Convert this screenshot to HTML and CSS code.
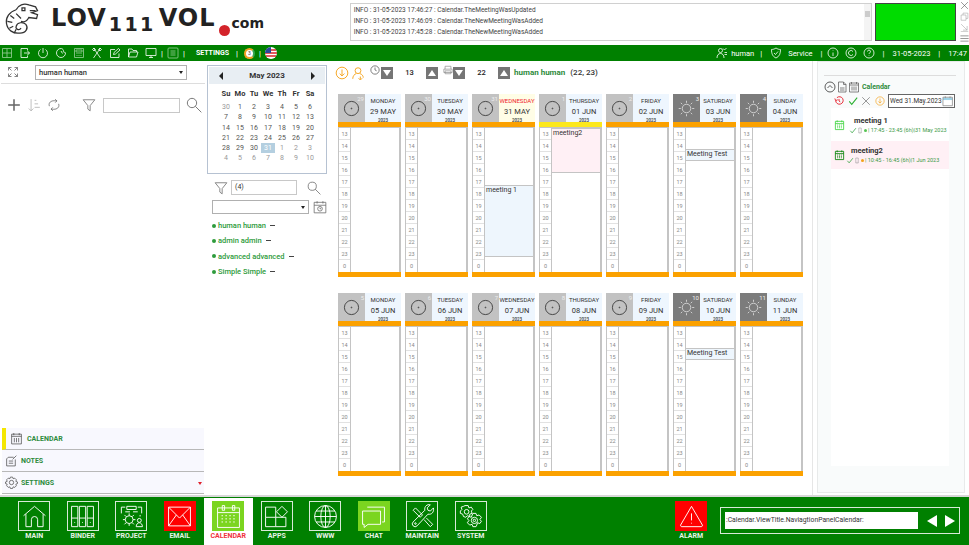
FILE: index.html
```html
<!DOCTYPE html>

<html>

<head>
    <title>Calendar - LOV111VOL</title>
    <link rel="stylesheet" href="styles.css">
</head>

<body>
    <svg class="iconDefs" xmlns="http://www.w3.org/2000/svg">
        <symbol id="grid" viewBox="0 0 24 24"><path d="M3 3h18v18H3zM12 3v18M3 12h18" /></symbol>
        <symbol id="exit" viewBox="0 0 24 24"><path d="M17 7V3H4v18h13v-4M10 12h11M17 8l4 4-4 4" /></symbol>
        <symbol id="power" viewBox="0 0 24 24"><path d="M12 2v10M7 5a9 9 0 1 0 10 0" /></symbol>
        <symbol id="dial" viewBox="0 0 24 24"><path d="M12 3a9 9 0 1 0 9 9c0-2-3-1-4-2s1-3-1-5-3-2-4-2zM8 9h.1M8 14h.1M12 17h.1M12 8l3 5" /></symbol>
        <symbol id="calc" viewBox="0 0 24 24"><path d="M3 3h18v18H3zM6 6h12v4H6zM7 13h2M11 13h2M15 13h2M7 17h2M11 17h2M15 17h2" /></symbol>
        <symbol id="tools" viewBox="0 0 24 24"><path d="M5 2l14 20M19 2L5 22M3 5l3-3 3 3-3 3zM15 5l3-3 3 3-3 3z" /></symbol>
        <symbol id="edit" viewBox="0 0 24 24"><path d="M20 13v8H3V5h9M9 15l1-4L19 3l3 3-9 8z" /></symbol>
        <symbol id="folder" viewBox="0 0 24 24"><path d="M3 20V4h7l2 3h7v3M3 20l3-10h16l-3 10z" /></symbol>
        <symbol id="monitor" viewBox="0 0 24 24"><path d="M2 3h20v14H2zM12 17v4M8 21h8" /></symbol>
        <symbol id="lines" viewBox="0 0 24 24"><path d="M4 2h16a2 2 0 0 1 2 2v16a2 2 0 0 1-2 2H4a2 2 0 0 1-2-2V4a2 2 0 0 1 2-2zM7 8h10M7 12h10M7 16h10" /></symbol>
        <symbol id="users" viewBox="0 0 24 24"><path d="M9 11a4 4 0 1 0 0-8 4 4 0 0 0 0 8zM2 22c0-6 3-9 7-9s7 3 7 9M14 3l3 3 4-4M17 11h5M17 15h5" /></symbol>
        <symbol id="shield" viewBox="0 0 24 24"><path d="M12 2c3 2 6 3 9 3 0 8-2 14-9 17C5 19 3 13 3 5c3 0 6-1 9-3zM8 12l3 3 5-6" /></symbol>
        <symbol id="info" viewBox="0 0 24 24"><circle cx="12" cy="12" r="10" /><path d="M12 7v1M12 11v7" /></symbol>
        <symbol id="copy" viewBox="0 0 24 24"><circle cx="12" cy="12" r="10" /><path d="M16 9a5 5 0 1 0 0 6" /></symbol>
        <symbol id="help" viewBox="0 0 24 24"><circle cx="12" cy="12" r="10" /><path d="M9 9a3 3 0 1 1 4 3c-1 .6-1 1-1 2M12 17v1" /></symbol>
        <symbol id="expand" viewBox="0 0 24 24"><path d="M3 9V3h6M3 3l6 6M21 9V3h-6M21 3l-6 6M3 15v6h6M3 21l6-6M21 15v6h-6M21 21l-6-6" /></symbol>
        <symbol id="plus" viewBox="0 0 24 24"><path d="M12 2v20M2 12h20" /></symbol>
        <symbol id="sort" viewBox="0 0 24 24"><path d="M7 2v20M3 18l4 4 4-4M13 4h3M13 10h6M13 16h9" /></symbol>
        <symbol id="refresh" viewBox="0 0 24 24"><path d="M4 14a8 8 0 0 1 0-5c2-4 6-5 13-4M14 2l3 3-3 3M20 10a8 8 0 0 1 0 5c-2 4-6 5-13 4M10 22l-3-3 3-3" /></symbol>
        <symbol id="filter" viewBox="0 0 24 24"><path d="M2 3h20l-8 10v9l-4-3v-6z" /></symbol>
        <symbol id="search" viewBox="0 0 24 24"><circle cx="9" cy="9" r="7" /><path d="M14 14l9 9" /></symbol>
        <symbol id="camera" viewBox="0 0 24 24"><path d="M2 4h20v18H2zM2 9h20M7 2v4M17 2v4" /><circle cx="12" cy="15" r="4" /><path d="M12 13v2h2" /></symbol>
        <symbol id="download" viewBox="0 0 24 24"><circle cx="12" cy="12" r="10" /><path d="M12 6v11M8 13l4 4 4-4" /></symbol>
        <symbol id="person" viewBox="0 0 24 24"><path d="M12 13a5 5 0 1 0 0-10 5 5 0 0 0 0 10zM3 22c0-5 3-8 6-9M21 20c0-3-2-6-6-7M16 18v5M13 21l3 3 3-3" /></symbol>
        <symbol id="clock" viewBox="0 0 24 24"><circle cx="12" cy="12" r="10" /><path d="M12 6v6l4 2" /></symbol>
        <symbol id="printer" viewBox="0 0 24 24"><path d="M5 10V3h14v7M2 10h20v8H2zM5 14h14v7H5z" /></symbol>
        <symbol id="dayClock" viewBox="0 0 24 24"><circle cx="12" cy="12" r="10" /><circle cx="12" cy="12" r=".6" /></symbol>
        <symbol id="sun" viewBox="0 0 24 24"><circle cx="12" cy="12" r="6" /><path d="M12 1v3M12 20v3M1 12h3M20 12h3M4 4l2 2M18 18l2 2M20 4l-2 2M6 18l-2 2" /></symbol>
        <symbol id="collapse" viewBox="0 0 24 24"><circle cx="12" cy="12" r="10" /><path d="M7 14l5-5 5 5" /></symbol>
        <symbol id="doc" viewBox="0 0 24 24"><path d="M5 22V2h10l5 5v15zM15 2v5h5M8 14h9M8 18h9" /></symbol>
        <symbol id="calSmall" viewBox="0 0 24 24"><path d="M3 4h18v18H3zM3 8h18M7 2v4M17 2v4M8 11v8M12 11v8M16 11v8" /></symbol>
        <symbol id="alarm" viewBox="0 0 24 24"><path d="M7 4a9 9 0 1 1-3 7M2 6l2 5 5-2M12 7v5l3 2" /></symbol>
        <symbol id="check" viewBox="0 0 24 24"><path d="M3 13l6 7L22 4" /></symbol>
        <symbol id="cross" viewBox="0 0 24 24"><path d="M3 3l18 18M21 3L3 21" /></symbol>
        <symbol id="calDots" viewBox="0 0 24 24"><path d="M3 4h18v18H3zM3 9h18M7 2v4M17 2v4M7 12h2M11 12h2M15 12h2M7 15h2M11 15h2M15 15h2M7 18h2M11 18h2M15 18h2" /></symbol>
        <symbol id="mobile" viewBox="0 0 24 24"><path d="M7 2h10v20H7zM11 19h2" /></symbol>
        <symbol id="note" viewBox="0 0 24 24"><path d="M16 6H6L3 9v13h16V10M7 13h8M7 17h8M14 10l7-7" /></symbol>
        <symbol id="gear" viewBox="0 0 24 24"><circle cx="12" cy="12" r="4" /><path d="M10 2h4l1 3 3-1 3 3-1 3 3 1v3l-3 1 1 3-3 3-3-1-1 3h-4l-1-3-3 1-3-3 1-3-3-1v-3l3-1-1-3 3-3 3 1z" /></symbol>
        <symbol id="home" viewBox="0 0 32 32"><path d="M2 15L16 3l14 12M5 13v16h7v-9a4 4 0 0 1 8 0v9h7V13" /></symbol>
        <symbol id="binder" viewBox="0 0 32 32"><path d="M2 3h8v26H2zM12 3h8v26h-8zM22 3h8v26h-8zM2 18h8M12 18h8M22 18h8M6 23v1M16 23v1M26 23v1" /></symbol>
        <symbol id="project" viewBox="0 0 32 32"><path d="M3 12V4h5M24 4h5v8M10 3h12v4H10zM8 10h6M18 10h6M27 16v-2" /><circle cx="13" cy="20" r="5" /><path d="M13 12v3M13 25v3M5 20h3M18 20h3M7 14l2 2M19 14l-2 2M7 26l2-2M19 26l-2-2" /><circle cx="26" cy="21" r="2.5" /><path d="M22 29c0-3 2-5 4-5s4 2 4 5z" /></symbol>
        <symbol id="mail" viewBox="0 0 32 32"><path d="M2 4h28v24H2zM2 4l14 14L30 4M2 28l10-14M30 28L20 14" /></symbol>
        <symbol id="bigCal" viewBox="0 0 32 32"><path d="M2 5h28v25H2zM2 11h28M8 2h3v6H8zM21 2h3v6h-3z" /><path class="dots" d="M7 15h2M12 15h2M17 15h2M22 15h2M7 19h2M12 19h2M17 19h2M22 19h2M7 23h2M12 23h2M17 23h2M22 23h2" /></symbol>
        <symbol id="apps" viewBox="0 0 32 32"><path d="M2 4h13v13H2zM2 17v12h13V17M15 29h13V17H15M16 10l7-7 7 7-7 7z" /></symbol>
        <symbol id="globe" viewBox="0 0 32 32"><circle cx="16" cy="16" r="14" /><ellipse cx="16" cy="16" rx="6" ry="14" /><path d="M16 2v28M2 16h28M4 9h24M4 23h24" /></symbol>
        <symbol id="chat" viewBox="0 0 32 32"><path d="M8 4h22v19h-3M2 9h23v17H9l-5 4v-4H2z" /></symbol>
        <symbol id="wrench" viewBox="0 0 32 32"><path d="M30 5l-4 4-3-1-1-3 4-4c-4-1-8 2-7 7L4 23a3 3 0 0 0 5 5L23 13c5 1 8-3 7-8zM4 8l3-3 9 9-3 3zM18 20l8 9 3-3-8-8" /><circle cx="7" cy="25" r="1" /></symbol>
        <symbol id="gears" viewBox="0 0 32 32"><circle cx="11" cy="10" r="3" /><path d="M9 2h4l1 3 3-1 2 3-2 2 1 3-3 1v3l-3-1-2 2-3-1-1-3-3-1V9l2-2-1-3 3-1z" /><circle cx="21" cy="21" r="4" /><circle cx="21" cy="21" r="1.5" /><path d="M19 12h4l1 3 3-1 3 3-2 3 2 2-2 3-3-1-1 3-1 2h-4l-1-3-3 1-3-3 2-3-2-2 2-3 3 1z" /></symbol>
        <symbol id="warn" viewBox="0 0 32 32"><path d="M16 3L2 27a2 2 0 0 0 1 2h26a2 2 0 0 0 1-2zM16 12v9M16 24v1" /></symbol>
    </svg>

    <div class="app">
        <header class="topRow">
            <div class="logo">
                <svg class="logoIcon" viewBox="0 0 36 34">
                    <path d="M12 8c2-5 8-7 13-5l7 2 2 4-6 2 6 2-1 4-8-1c-2 4-5 5-8 4" />
                    <path d="M12 8C5 10 1 16 2 22c1 7 7 11 14 10 6 0 9-5 6-9-3-3-9-2-10 2-1 3 3 5 5 2" />
                    <path d="M6 14l4 3M3 20l5 1M5 27l4-2M10 32l2-4M18 6h3v3h-3zM12 12l5 5M26 9h6" />
                </svg>
                <span class="logoWord">LOV</span>
                <span class="logoNum">111</span>
                <span class="logoWord">VOL</span>
                <span class="logoDot"></span>
                <span class="logoCom">com</span>
            </div>
            <div class="logBox">
                <div class="logLines">
                    <div>INFO : 31-05-2023 17:46:27 : Calendar.TheMeetingWasUpdated</div>
                    <div>INFO : 31-05-2023 17:46:09 : Calendar.TheNewMeetingWasAdded</div>
                    <div>INFO : 31-05-2023 17:45:28 : Calendar.TheNewMeetingWasAdded</div>
                </div>
                <div class="logScroll"><span></span></div>
            </div>
            <div class="statusBox"></div>
            <div class="winBtns">
                <svg class="ic"><use href="#cross" /></svg>
                <svg class="ic lite" viewBox="0 0 24 24"><path d="M8 8V3h13v14h-5M3 8h13v14H3z" /></svg>
                <svg class="ic lite" viewBox="0 0 24 24"><path d="M3 3l16 16M19 8v11H8M2 23h20" /></svg>
                <svg class="ic" viewBox="0 0 24 24"><path d="M1 5h22M1 12h22M1 19h22" /></svg>
            </div>
        </header>

        <nav class="menuBar">
            <svg class="ic dimIc"><use href="#grid" /></svg>
            <svg class="ic"><use href="#exit" /></svg>
            <svg class="ic"><use href="#power" /></svg>
            <svg class="ic"><use href="#dial" /></svg>
            <svg class="ic dimIc"><use href="#calc" /></svg>
            <svg class="ic"><use href="#tools" /></svg>
            <svg class="ic"><use href="#edit" /></svg>
            <svg class="ic"><use href="#folder" /></svg>
            <svg class="ic"><use href="#monitor" /></svg>
            <span class="sep">|</span>
            <svg class="ic dimIc"><use href="#lines" /></svg>
            <span class="sep">|</span>
            <span class="menuText">SETTINGS</span>
            <span class="sep">|</span>
            <span class="badge">3</span>
            <span class="sep">|</span>
            <svg class="flag" viewBox="0 0 12 12">
                <circle cx="6" cy="6" r="6" fill="#fff" />
                <path d="M1 3h10M0 6h12M1 9h10" stroke="#d8232a" stroke-width="1.5" />
                <path d="M0 6a6 6 0 0 1 6-6v6z" fill="#2b4a9b" />
            </svg>
            <div class="menuRight">
                <svg class="ic"><use href="#users" /></svg>
                <span class="menuName">human</span>
                <span class="sep">|</span>
                <svg class="ic"><use href="#shield" /></svg>
                <span>Service</span>
                <span class="sep">|</span>
                <svg class="ic infoIc"><use href="#info" /></svg>
                <svg class="ic"><use href="#copy" /></svg>
                <svg class="ic"><use href="#help" /></svg>
                <span class="sep">|</span>
                <span>31-05-2023</span>
                <span class="sep">|</span>
                <span>17:47</span>
            </div>
        </nav>

        <main class="mainRow">
            <aside class="leftPanel">
                <div class="userRow">
                    <svg class="ic grayIc"><use href="#expand" /></svg>
                    <div class="selectBox userSelect">human human<span class="caret"></span></div>
                </div>
                <div class="toolRow">
                    <svg class="toolIc plusIc"><use href="#plus" /></svg>
                    <svg class="toolIc lightIc"><use href="#sort" /></svg>
                    <svg class="toolIc"><use href="#refresh" /></svg>
                    <svg class="toolIc filterIc"><use href="#filter" /></svg>
                    <div class="textBox toolInput"></div>
                    <svg class="toolIc searchIc"><use href="#search" /></svg>
                </div>
                <div class="sideNav">
                    <div class="sideItem sideActive">
                        <svg class="sideIc"><use href="#calSmall" /></svg>CALENDAR
                    </div>
                    <div class="sideItem">
                        <svg class="sideIc"><use href="#note" /></svg>NOTES
                    </div>
                    <div class="sideItem">
                        <svg class="sideIc"><use href="#gear" /></svg>SETTINGS<span class="redCaret"></span>
                    </div>
                </div>
            </aside>

            <section class="midPanel">
                <div class="monthCal">
                    <div class="monthHead"><span class="arrowLeft"></span>May 2023<span class="arrowRight"></span></div>
                    <div class="monthGrid" id="monthGrid"></div>
                </div>
                <div class="midFilter">
                    <svg class="toolIc filterIc"><use href="#filter" /></svg>
                    <div class="textBox midInput">(4)</div>
                    <svg class="toolIc"><use href="#search" /></svg>
                </div>
                <div class="midSelect">
                    <div class="selectBox midBox"><span class="caret"></span></div>
                    <svg class="toolIc"><use href="#camera" /></svg>
                </div>
                <ul class="userList">
                    <li>human human<span class="dash"></span></li>
                    <li>admin admin<span class="dash"></span></li>
                    <li>advanced advanced<span class="dash"></span></li>
                    <li>Simple Simple<span class="dash"></span></li>
                </ul>
            </section>

            <section class="weekPanel">
                <div class="weekTools">
                    <svg class="orangeIc"><use href="#download" /></svg>
                    <svg class="orangeIc"><use href="#person" /></svg>
                    <svg class="spinIc"><use href="#clock" /></svg>
                    <div class="spinner">
                        <span class="spinBtn"><i class="triDown"></i></span>
                        <span class="spinVal">13</span>
                        <span class="spinBtn"><i class="triUp"></i></span>
                    </div>
                    <svg class="spinIc printIc"><use href="#printer" /></svg>
                    <div class="spinner">
                        <span class="spinBtn"><i class="triDown"></i></span>
                        <span class="spinVal">22</span>
                        <span class="spinBtn"><i class="triUp"></i></span>
                    </div>
                    <span class="weekUser">human human</span>
                    <span class="weekRange">(22, 23)</span>
                </div>
                <div class="weeks" id="weeks"></div>
            </section>

            <aside class="rightPanel">
                <div class="rightInner">
                    <div class="rightTitle">
                        <svg class="ic darkIc"><use href="#collapse" /></svg>
                        <svg class="ic grayIc"><use href="#doc" /></svg>
                        <svg class="ic grayIc"><use href="#calSmall" /></svg>
                        <span>Calendar</span>
                    </div>
                    <div class="rightTools">
                        <svg class="rtIc redIc"><use href="#alarm" /></svg>
                        <svg class="rtIc greenIc"><use href="#check" /></svg>
                        <svg class="rtIc grayIc"><use href="#cross" /></svg>
                        <svg class="rtIc orangeStroke"><use href="#download" /></svg>
                        <div class="dateBox">Wed 31.May.2023<svg class="dateIc" viewBox="0 0 24 24"><path class="dateTop" d="M2 5h20v5H2z" /><path d="M2 4h20v18H2zM7 2v4M17 2v4" /></svg></div>
                    </div>
                    <div class="meetList">
                        <div class="meetItem">
                            <svg class="meetIc limeIc"><use href="#calDots" /></svg>
                            <div class="meetText meetFirst">
                                <div class="meetName">meeting 1</div>
                                <div class="meetLine">
                                    <svg class="tinyCheck"><use href="#check" /></svg>
                                    <svg class="tinyPhone"><use href="#mobile" /></svg>
                                    <span class="meetDot"></span>| 17:45 - 23:45 (6h)|31 May 2023
                                </div>
                            </div>
                        </div>
                        <div class="meetItem meetPink">
                            <svg class="meetIc"><use href="#calDots" /></svg>
                            <div class="meetText">
                                <div class="meetName">meeting2</div>
                                <div class="meetLine">
                                    <svg class="tinyCheck"><use href="#check" /></svg>
                                    <svg class="tinyPhone"><use href="#mobile" /></svg>
                                    <span class="meetDot dotOrange"></span>| 10:45 - 16:45 (6h)|1 Jun 2023
                                </div>
                            </div>
                        </div>
                    </div>
                </div>
            </aside>
        </main>

        <footer class="bottomBar">
            <div class="navBtn"><span class="navBox"><svg><use href="#home" /></svg></span>MAIN</div>
            <div class="navBtn"><span class="navBox"><svg><use href="#binder" /></svg></span>BINDER</div>
            <div class="navBtn"><span class="navBox"><svg><use href="#project" /></svg></span>PROJECT</div>
            <div class="navBtn"><span class="navBox navRed"><svg><use href="#mail" /></svg></span>EMAIL</div>
            <div class="navBtn navActive"><span class="navBox navLime"><svg><use href="#bigCal" /></svg></span>CALENDAR</div>
            <div class="navBtn"><span class="navBox"><svg><use href="#apps" /></svg></span>APPS</div>
            <div class="navBtn"><span class="navBox"><svg><use href="#globe" /></svg></span>WWW</div>
            <div class="navBtn"><span class="navBox navLime"><svg><use href="#chat" /></svg></span>CHAT</div>
            <div class="navBtn"><span class="navBox"><svg><use href="#wrench" /></svg></span>MAINTAIN</div>
            <div class="navBtn"><span class="navBox"><svg><use href="#gears" /></svg></span>SYSTEM</div>
            <div class="navBtn alarmBtn"><span class="navBox navRed"><svg><use href="#warn" /></svg></span>ALARM</div>
            <div class="titleBox">
                <div class="titleInput">:Calendar.ViewTitle.NaviagtionPanelCalendar:</div>
                <span class="bigLeft"></span>
                <span class="bigRight"></span>
            </div>
        </footer>
    </div>
    <script src="script.js"></script>
</body>

</html>
```

FILE: styles.css
```css
* {
    box-sizing: border-box;
}

body {
    margin: 0;
    background-color: #fff;
    color: #333;
    font-family: Roboto, sans-serif;
    font-size: 7px;
}

svg {
    fill: none;
    stroke: currentColor;
    stroke-width: 1.6;
}

.iconDefs {
    display: none;
}

.app {
    display: flex;
    flex-direction: column;
    width: 969px;
    height: 545px;
    overflow: hidden;
}

/* top row */
.topRow {
    display: flex;
    height: 45px;
    flex: none;
}

.logo {
    display: flex;
    align-items: flex-start;
    width: 350px;
    padding: 2px 0 0 4px;
    color: #222;
    font-family: "DejaVu Sans", sans-serif;
    font-weight: 700;
}

.logoIcon {
    width: 36px;
    height: 33px;
    margin-right: 11px;
    stroke: #333;
    stroke-width: 1.3;
}

.logoWord {
    margin-top: 1px;
    font-size: 24px;
    line-height: 30px;
    letter-spacing: 1px;
}

.logoNum {
    margin: 8px 3px 0 2px;
    font-size: 19px;
    line-height: 28px;
    letter-spacing: 2.4px;
}

.logoDot {
    width: 11px;
    height: 11px;
    margin: 23px 2px 0 3px;
    border-radius: 50%;
    background-color: #d3232a;
}

.logoCom {
    margin: 11px 0 0 0;
    font-size: 14px;
    line-height: 20px;
}

.logBox {
    display: flex;
    width: 523px;
    height: 38px;
    margin-top: 3px;
    border: 1px solid #d0d0d0;
}

.logLines {
    flex: 1;
    padding: 1px 3px;
    color: #444;
    font-size: 6.5px;
    line-height: 11px;
}

.logScroll {
    width: 7px;
    padding: 7px 1px;
    background-color: #f4f4f4;
}

.logScroll span {
    display: block;
    height: 6px;
    background-color: #ccc;
}

.statusBox {
    width: 81px;
    height: 38px;
    margin: 3px 0 0 3px;
    border: 1px solid #444;
    background-color: #00dc00;
}

.winBtns {
    display: flex;
    flex-direction: column;
    gap: 2px;
    padding: 1px 0 0 4px;
    color: #555;
}

.winBtns .ic {
    width: 9px;
    height: 9px;
}

.winBtns .lite {
    color: #aaa;
}

.ic {
    width: 12px;
    height: 12px;
    flex: none;
}

/* green menu */
.menuBar {
    display: flex;
    align-items: center;
    gap: 6px;
    height: 16px;
    flex: none;
    padding: 0 2px 0 1px;
    background-color: #008000;
    color: #fff;
}

.dimIc {
    color: #9ccf9c;
}

.sep {
    margin: 0 -2px;
    font-size: 8px;
}

.menuText {
    margin: 0 3px 0 7px;
    font-size: 7px;
    font-weight: 700;
}

.badge {
    width: 11px;
    height: 11px;
    margin-left: 2px;
    border: 2px solid #f2a024;
    border-right-color: #35a853;
    border-radius: 50%;
    background-color: #fff;
    color: #444;
    font-size: 5px;
    line-height: 7px;
    text-align: center;
}

.flag {
    width: 12px;
    height: 12px;
    stroke: none;
}

.menuRight {
    display: flex;
    align-items: center;
    gap: 6px;
    margin-left: auto;
    font-size: 7.5px;
}

.menuRight .sep {
    margin: 0 2px;
}

.menuName {
    margin: 0 -2px 0 -3px;
}

.infoIc {
    margin-left: -4px;
}

/* main */
.mainRow {
    display: flex;
    height: 436px;
    flex: none;
    border-bottom: 2px solid #d8d8d8;
}

.leftPanel {
    display: flex;
    flex-direction: column;
    width: 205px;
    flex: none;
    padding-left: 1px;
}

.userRow {
    display: flex;
    align-items: center;
    gap: 16px;
    height: 23px;
    padding-left: 6px;
    border-bottom: 1px solid #ddd;
}

.selectBox {
    position: relative;
    height: 15px;
    padding-left: 3px;
    border: 1px solid #b0b0b0;
    color: #333;
    font-size: 7.5px;
    font-weight: 500;
    line-height: 13px;
}

.userSelect {
    width: 152px;
}

.caret {
    position: absolute;
    top: 5px;
    right: 3px;
    border: 2px solid transparent;
    border-top: 3px solid #222;
}

.grayIc {
    color: #666;
}

.toolRow {
    display: flex;
    align-items: center;
    margin-top: 13px;
    padding-left: 6px;
}

.toolIc {
    width: 14px;
    height: 14px;
    flex: none;
    color: #666;
    stroke-width: 1.3;
}

.toolRow .toolIc {
    margin-right: 6px;
}

.plusIc {
    stroke-width: 2.6;
}

.lightIc {
    color: #aaa;
}

.toolRow .filterIc {
    margin: 0 7px 0 15px;
}

.toolRow .searchIc {
    width: 16px;
    height: 16px;
}

.textBox {
    height: 15px;
    flex: none;
    padding-left: 3px;
    border: 1px solid #c8c8c8;
    line-height: 13px;
}

.toolInput {
    width: 77px;
    margin-right: 6px;
}

.sideNav {
    width: 203px;
    margin-top: auto;
    padding-bottom: 1px;
    padding-left: 1px;
}

.sideItem {
    position: relative;
    display: flex;
    align-items: center;
    gap: 3px;
    height: 22px;
    padding-left: 3px;
    border-bottom: 1px solid #b8b8b8;
    background-color: #f8f8fe;
    color: #2e8b3c;
    font-size: 7px;
    font-weight: 700;
}

.sideActive {
    padding-left: 4px;
    gap: 4px;
    border-left: 4px solid #f4e600;
}

.sideIc {
    width: 13px;
    height: 13px;
    color: #444;
    stroke-width: 1.3;
}

.redCaret {
    position: absolute;
    top: 10px;
    right: 2px;
    border: 2px solid transparent;
    border-top: 3px solid #e0202a;
}

.midPanel {
    width: 133px;
    flex: none;
    padding: 4px 0 0 2px;
}

.monthCal {
    width: 120px;
    height: 109px;
    padding: 1px;
    border: 1px solid #b6c2d2;
}

.monthHead {
    display: flex;
    align-items: center;
    justify-content: space-between;
    height: 17px;
    padding: 0 10px;
    background-color: #e8eef3;
    color: #333;
    font-size: 8px;
    font-weight: 700;
}

.arrowLeft {
    border: 4px solid transparent;
    border-right: 4px solid #222;
    border-left: 0;
}

.arrowRight {
    border: 4px solid transparent;
    border-left: 4px solid #222;
    border-right: 0;
}

.monthGrid {
    display: grid;
    grid-template-columns: repeat(7, 14px);
    grid-template-rows: 13px;
    grid-auto-rows: 10.25px;
    padding: 5px 0 0 10px;
    color: #555;
    font-size: 7px;
    line-height: 10px;
    text-align: center;
}

.monthGrid .dayName {
    color: #333;
    font-size: 7.5px;
    font-weight: 700;
}

.monthGrid .other {
    color: #999;
}

.monthGrid .today {
    background-color: #b4cfe0;
    color: #fff;
}

.midFilter {
    display: flex;
    align-items: center;
    margin: 6px 0 0 7px;
    gap: 3px;
}

.midInput {
    width: 66px;
    margin-right: 7px;
}

.midSelect {
    display: flex;
    align-items: center;
    gap: 4px;
    margin: 5px 0 0 5px;
}

.midBox {
    width: 97px;
    height: 14px;
}

.userList {
    margin: 4px 0 0 5px;
    padding: 0;
    list-style: none;
    color: #2e9b3c;
    font-size: 7.5px;
    font-weight: 500;
}

.userList li {
    display: flex;
    align-items: center;
    height: 15.3px;
}

.userList li::before {
    content: "";
    width: 4px;
    height: 4px;
    margin-right: 2px;
    border-radius: 50%;
    background-color: #2e9b3c;
}

.dash {
    width: 5px;
    height: 1px;
    margin-left: 4px;
    background-color: #444;
}

.weekPanel {
    width: 474px;
    flex: none;
}

.weekTools {
    display: flex;
    align-items: center;
    height: 22px;
    padding-top: 1px;
}

.orangeIc {
    width: 14px;
    height: 14px;
    margin-right: 2px;
    color: #f4a21a;
}

.orangeIc:first-child {
    margin-left: -3px;
}

.spinIc {
    align-self: flex-start;
    width: 10px;
    height: 10px;
    margin: 3px 1px 0 3px;
    color: #444;
}

.printIc {
    margin: 3px 0 0 5px;
    color: #888;
}

.spinner {
    display: flex;
    width: 57px;
    height: 12px;
}

.spinBtn {
    display: flex;
    align-items: center;
    justify-content: center;
    width: 12px;
    background-color: #757575;
}

.triDown {
    display: block;
    border: 4px solid transparent;
    border-top: 6px solid #fff;
    border-bottom: 0;
}

.triUp {
    display: block;
    border: 4px solid transparent;
    border-bottom: 6px solid #fff;
    border-top: 0;
}

.spinVal {
    flex: 1;
    color: #222;
    font-size: 7.5px;
    font-weight: 500;
    line-height: 12px;
    text-align: center;
}

.weekUser {
    margin-left: 4px;
    color: #2e8b3c;
    font-size: 8px;
    font-weight: 700;
}

.weekRange {
    margin-left: 5px;
    color: #333;
    font-size: 8px;
    font-weight: 500;
}

.weeks {
    display: grid;
    grid-template-columns: repeat(7, 63px);
    column-gap: 4px;
    row-gap: 16px;
    margin-top: 11px;
}

.day {
    display: flex;
    flex-direction: column;
    height: 183px;
}

.dayHead {
    display: flex;
    height: 28px;
}

.dayIcon {
    position: relative;
    display: flex;
    align-items: center;
    justify-content: center;
    width: 27px;
    background-color: #c2c2c2;
    color: #333;
}

.dayIcon svg {
    width: 17px;
    height: 17px;
    stroke-width: 1.2;
}

.weekend {
    background-color: #7c7c7c;
    color: #ddd;
}

.dayNum {
    position: absolute;
    top: 1px;
    right: 1px;
    color: #eee;
    font-size: 6px;
    line-height: 7px;
}

.dayInfo {
    display: flex;
    flex-direction: column;
    flex: 1;
    align-items: center;
    background-color: #eef6fe;
    color: #333;
}

.dayToday {
    background-color: #fffde6;
}

.dayName2 {
    margin-top: 2px;
    font-size: 6px;
    line-height: 9px;
}

.dayToday .dayName2 {
    color: #f01d2c;
}

.dayDate {
    margin-top: 2px;
    font-size: 7.5px;
    line-height: 10px;
}

.dayYear {
    margin-top: 1px;
    font-size: 4.5px;
    font-weight: 500;
    line-height: 6px;
}

.dayBar {
    height: 5px;
    flex: none;
    background-color: #fba100;
}

.dayBarYellow {
    background-color: #fce81c;
}

.dayBody {
    position: relative;
    display: flex;
    flex: 1;
    border-top: 1px solid #c4c4c4;
    border-right: 2px solid #c4c4c4;
    border-left: 1px solid #c4c4c4;
}

.hours {
    width: 12px;
    flex: none;
    border-right: 1px solid #c4c4c4;
}

.hour {
    height: 12px;
    border-bottom: 1px solid #e2e2e2;
    color: #888;
    font-size: 5.5px;
    line-height: 12px;
    text-align: center;
}

.hour:last-child {
    border-bottom: 0;
}

.event {
    position: absolute;
    left: 12px;
    right: 0;
    padding-left: 1px;
    border-top: 1px solid #c4c4c4;
    border-bottom: 1px solid #c4c4c4;
    color: #333;
    font-size: 7px;
    line-height: 8px;
    background-color: #eef6fd;
}

.eventPink {
    background-color: #fff0f5;
}

.rightPanel {
    flex: 1;
    padding: 0 4px 2px 4px;
    border-left: 1px solid #e6e6e6;
}

.rightInner {
    height: 100%;
    padding: 13px 8px 0 6px;
    border: 1px solid #e8eaea;
    background-color: #f9fbfb;
}

.rightTitle {
    display: flex;
    align-items: center;
    height: 19px;
    padding-top: 3px;
    border-top: 1px solid #ddd;
    color: #2e8b3c;
    font-size: 7px;
    font-weight: 700;
}

.rightTitle span {
    margin-left: 2px;
}

.darkIc {
    color: #333;
}

.rightTools {
    display: flex;
    align-items: center;
    gap: 3.5px;
    height: 14px;
    margin-left: 10px;
}

.rtIc {
    width: 10px;
    height: 10px;
    flex: none;
}

.redIc {
    color: #e51c2a;
    stroke-width: 2.2;
}

.greenIc {
    color: #2bb032;
    stroke-width: 2.6;
}

.orangeStroke {
    color: #f4a21a;
}

.dateBox {
    display: flex;
    align-items: center;
    justify-content: space-between;
    width: 67px;
    height: 14px;
    flex: none;
    padding: 0 1px;
    border: 1px solid #666;
    background-color: #fff;
    font-size: 6.5px;
    white-space: nowrap;
}

.dateIc {
    width: 12px;
    height: 12px;
    color: #888;
}

.dateTop {
    fill: #9fd4e8;
    stroke: none;
}

.meetList {
    height: 358px;
    margin: 0 7px;
    padding-top: 3px;
    background-color: #fff;
}

.meetItem {
    display: flex;
    align-items: center;
    height: 28px;
    margin-bottom: 2px;
    padding-left: 3px;
    color: #008000;
}

.meetPink {
    background-color: #fff0f5;
}

.meetIc {
    width: 11px;
    height: 12px;
    flex: none;
    stroke-width: 1.8;
}

.limeIc {
    color: #3bd33b;
}

.meetText {
    margin-left: 1px;
}

.meetFirst {
    margin-left: 4px;
}

.meetName {
    margin-left: 5px;
    color: #333;
    font-size: 7.5px;
    font-weight: 700;
    line-height: 10px;
}

.meetLine {
    display: flex;
    align-items: center;
    color: #3c9a46;
    font-size: 5.5px;
    line-height: 8px;
    white-space: nowrap;
}

.tinyCheck {
    width: 8px;
    height: 7px;
    color: #1d9a2d;
    stroke-width: 2.4;
}

.tinyPhone {
    width: 6px;
    height: 7px;
    color: #777;
}

.meetDot {
    width: 3px;
    height: 3px;
    margin: 0 1px;
    border-radius: 50%;
    background-color: #55c455;
}

.dotOrange {
    background-color: #f4a21a;
}

/* bottom bar */
.bottomBar {
    display: flex;
    flex: 1;
    align-items: stretch;
    padding: 1px 0 0 10px;
    background-color: #008000;
    color: #e8f4e8;
    font-size: 7px;
    font-weight: 700;
}

.navBtn {
    display: flex;
    flex-direction: column;
    align-items: center;
    gap: 1px;
    width: 48.5px;
    flex: none;
    padding-top: 3px;
    text-align: center;
}

.navBox {
    display: flex;
    align-items: center;
    justify-content: center;
    width: 32px;
    height: 30px;
    border: 1px solid #d7ead7;
    color: #fff;
}

.navBox svg {
    width: 27px;
    height: 25px;
    stroke-width: 1.2;
}

.navRed {
    border-color: #f00;
    background-color: #f00;
}

.navLime {
    border-color: #7bd520;
    background-color: #7bd520;
}

.navActive {
    background-color: #fff;
    color: #f0323c;
}

.navActive .dots {
    stroke-width: 1.8;
}

.alarmBtn {
    margin-left: 172px;
}

.titleBox {
    display: flex;
    align-items: center;
    gap: 5px;
    width: 240px;
    height: 27px;
    flex: none;
    margin: 9px 0 0 4.5px;
    padding-left: 4px;
    border: 1px solid #d7ead7;
}

.titleInput {
    width: 193px;
    height: 17px;
    margin-right: 4px;
    padding-left: 1px;
    background-color: #fff;
    color: #333;
    font-size: 6.8px;
    font-weight: 400;
    line-height: 17px;
}

.bigLeft {
    border: 6px solid transparent;
    border-right: 10px solid #fff;
    border-left: 0;
}

.bigRight {
    margin-left: 3px;
    border: 6px solid transparent;
    border-left: 10px solid #fff;
    border-right: 0;
}
```

FILE: script.js
```js
let hourList = [13, 14, 15, 16, 17, 18, 19, 20, 21, 22, 23, 0]
let rowHeight = 12

let days = [
    { num: 29, name: "MONDAY", date: "29 MAY" },
    { num: 30, name: "TUESDAY", date: "30 MAY" },
    { num: 31, name: "WEDNESDAY", date: "31 MAY", today: true, event: { text: "meeting 1", from: 4.75, to: 10.75 } },
    { num: 1, name: "THURSDAY", date: "01 JUN", yellow: true, event: { text: "meeting2", from: 0, to: 3.75, pink: true } },
    { num: 2, name: "FRIDAY", date: "02 JUN" },
    { num: 3, name: "SATURDAY", date: "03 JUN", weekend: true, event: { text: "Meeting Test", from: 1.75, to: 2.75 } },
    { num: 4, name: "SUNDAY", date: "04 JUN", weekend: true },
    { num: 5, name: "MONDAY", date: "05 JUN" },
    { num: 6, name: "TUESDAY", date: "06 JUN" },
    { num: 7, name: "WEDNESDAY", date: "07 JUN" },
    { num: 8, name: "THURSDAY", date: "08 JUN" },
    { num: 9, name: "FRIDAY", date: "09 JUN" },
    { num: 10, name: "SATURDAY", date: "10 JUN", weekend: true, event: { text: "Meeting Test", from: 1.75, to: 2.75 } },
    { num: 11, name: "SUNDAY", date: "11 JUN", weekend: true }
]

function dayHtml(d) {
    let hours = hourList.map(h => '<div class="hour">' + h + '</div>').join("")
    let ev = ""
    if (d.event) {
        let top = d.event.from * rowHeight
        let height = (d.event.to - d.event.from) * rowHeight
        ev = '<div class="event' + (d.event.pink ? " eventPink" : "") + '" style="top: ' + top + 'px; height: ' + height + 'px">' + d.event.text + '</div>'
    }
    return '<div class="day">'
        + '<div class="dayHead">'
        + '<div class="dayIcon' + (d.weekend ? " weekend" : "") + '"><span class="dayNum">' + d.num + '</span>'
        + '<svg><use href="#' + (d.weekend ? "sun" : "dayClock") + '" /></svg></div>'
        + '<div class="dayInfo' + (d.today ? " dayToday" : "") + '">'
        + '<span class="dayName2">' + d.name + '</span>'
        + '<span class="dayDate">' + d.date + '</span>'
        + '<span class="dayYear">2023</span></div></div>'
        + '<div class="dayBar' + (d.yellow ? " dayBarYellow" : "") + '"></div>'
        + '<div class="dayBody"><div class="hours">' + hours + '</div>' + ev + '</div>'
        + '<div class="dayBar"></div></div>'
}

document.getElementById("weeks").innerHTML = days.map(dayHtml).join("")

let names = ["Su", "Mo", "Tu", "We", "Th", "Fr", "Sa"]
let cells = names.map(n => '<div class="dayName">' + n + '</div>')
let nums = [30]
for (let i = 1; i <= 31; ++i) nums.push(i)
for (let i = 1; i <= 10; ++i) nums.push(i)
nums.forEach((n, i) => {
    let cls = (i == 0 || i > 31) ? "other" : (i == 31 ? "today" : "")
    cells.push('<div class="' + cls + '">' + n + '</div>')
})
document.getElementById("monthGrid").innerHTML = cells.join("")
```
